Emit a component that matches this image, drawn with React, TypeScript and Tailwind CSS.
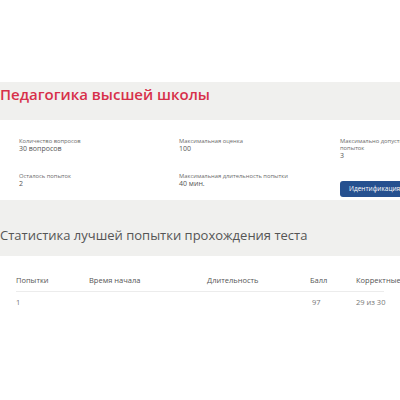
export default function App() {
  const font = { fontFamily: '"Open Sans", "Liberation Sans", sans-serif' };
  return (
    <div className="w-[400px] h-[400px] overflow-hidden bg-white" style={font}>
      {/* верхний отступ */}
      <div className="h-[82px] bg-white" />

      {/* заголовок курса */}
      <div className="h-[38px] bg-[#f0f0ee] pt-[2px]">
        <h1 className="text-[15px] leading-[20px] font-semibold text-[#d7304a] whitespace-nowrap">
          Педагогика высшей школы
        </h1>
      </div>

      {/* карточка с параметрами теста */}
      <div className="h-[80px] bg-white pt-[18px] pl-[19px]">
        <div className="grid grid-cols-[160px_161px_200px] whitespace-nowrap">
          <div className="h-[35px]">
            <div className="text-[5.8px] leading-[7px] text-[#6a6a6a]">Количество вопросов</div>
            <div className="text-[7px] leading-[8px] text-[#555]">30 вопросов</div>
          </div>
          <div className="h-[35px]">
            <div className="text-[5.8px] leading-[7px] text-[#6a6a6a]">Максимальная оценка</div>
            <div className="text-[7px] leading-[8px] text-[#555]">100</div>
          </div>
          <div className="h-[35px]">
            <div className="text-[5.8px] leading-[7px] text-[#6a6a6a]">
              Максимально допустимое количество
              <br />
              попыток
            </div>
            <div className="text-[7px] leading-[8px] text-[#555]">3</div>
          </div>

          <div>
            <div className="text-[5.8px] leading-[7px] text-[#6a6a6a]">Осталось попыток</div>
            <div className="text-[7px] leading-[8px] text-[#555]">2</div>
          </div>
          <div>
            <div className="text-[5.8px] leading-[7px] text-[#6a6a6a]">Максимальная длительность попытки</div>
            <div className="text-[7px] leading-[8px] text-[#555]">40 мин.</div>
          </div>
          <div>
            <button className="h-[16px] pl-[9px] pr-[10px] rounded-[3px] bg-[#25508f] text-white text-[6.5px] leading-[16px] font-medium">
              Идентификация
            </button>
          </div>
        </div>
      </div>

      {/* статистика */}
      <div className="h-[56px] bg-[#f0f0ee] pt-[26px]">
        <h2 className="text-[13px] leading-[18px] text-[#555] whitespace-nowrap">
          Статистика лучшей попытки прохождения теста
        </h2>
      </div>

      <div className="pt-[19px] px-[16px] text-[7.5px] whitespace-nowrap">
        <div className="grid grid-cols-[73px_118px_103px_46px_80px] leading-[10px] text-[#555] pb-[6px] border-b border-[#ececec]">
          <div>Попытки</div>
          <div>Время начала</div>
          <div>Длительность</div>
          <div>Балл</div>
          <div>Корректные</div>
        </div>
        <div className="grid grid-cols-[73px_118px_103px_46px_80px] leading-[10px] text-[#777] pt-[5px]">
          <div>1</div>
          <div></div>
          <div></div>
          <div className="pl-[2px]">97</div>
          <div>29 из 30</div>
        </div>
      </div>
    </div>
  );
}
